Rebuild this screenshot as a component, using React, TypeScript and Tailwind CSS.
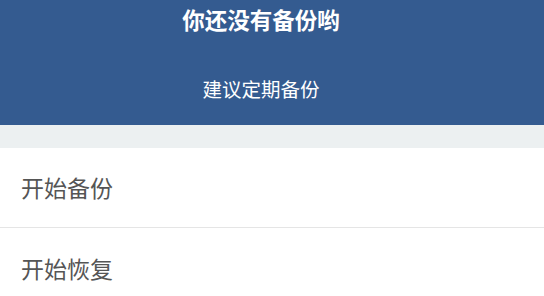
export default function App() {
  return (
    <div
      className="w-[544px] h-[296px] overflow-hidden bg-white"
      style={{ fontFamily: '"Noto Sans CJK SC", "Noto Sans", sans-serif' }}
    >
      <div className="h-[125px] bg-[#345b90] flex flex-col items-center pr-[22px] text-white">
        <div className="h-[38px] flex items-center text-[22.5px] font-bold leading-none">你还没有备份哟</div>
        <div className="mt-[32px] h-[38px] flex items-center text-[19.5px] leading-none">建议定期备份</div>
      </div>
      <div className="h-[23px] bg-[#ecf0f1]" />
      <div className="h-[80px] flex items-center px-[21px] text-[23px] text-[#555555] border-b border-[#e5e5e5]">
        开始备份
      </div>
      <div className="h-[80px] flex items-center px-[21px] text-[23px] text-[#555555]">
        开始恢复
      </div>
    </div>
  );
}
